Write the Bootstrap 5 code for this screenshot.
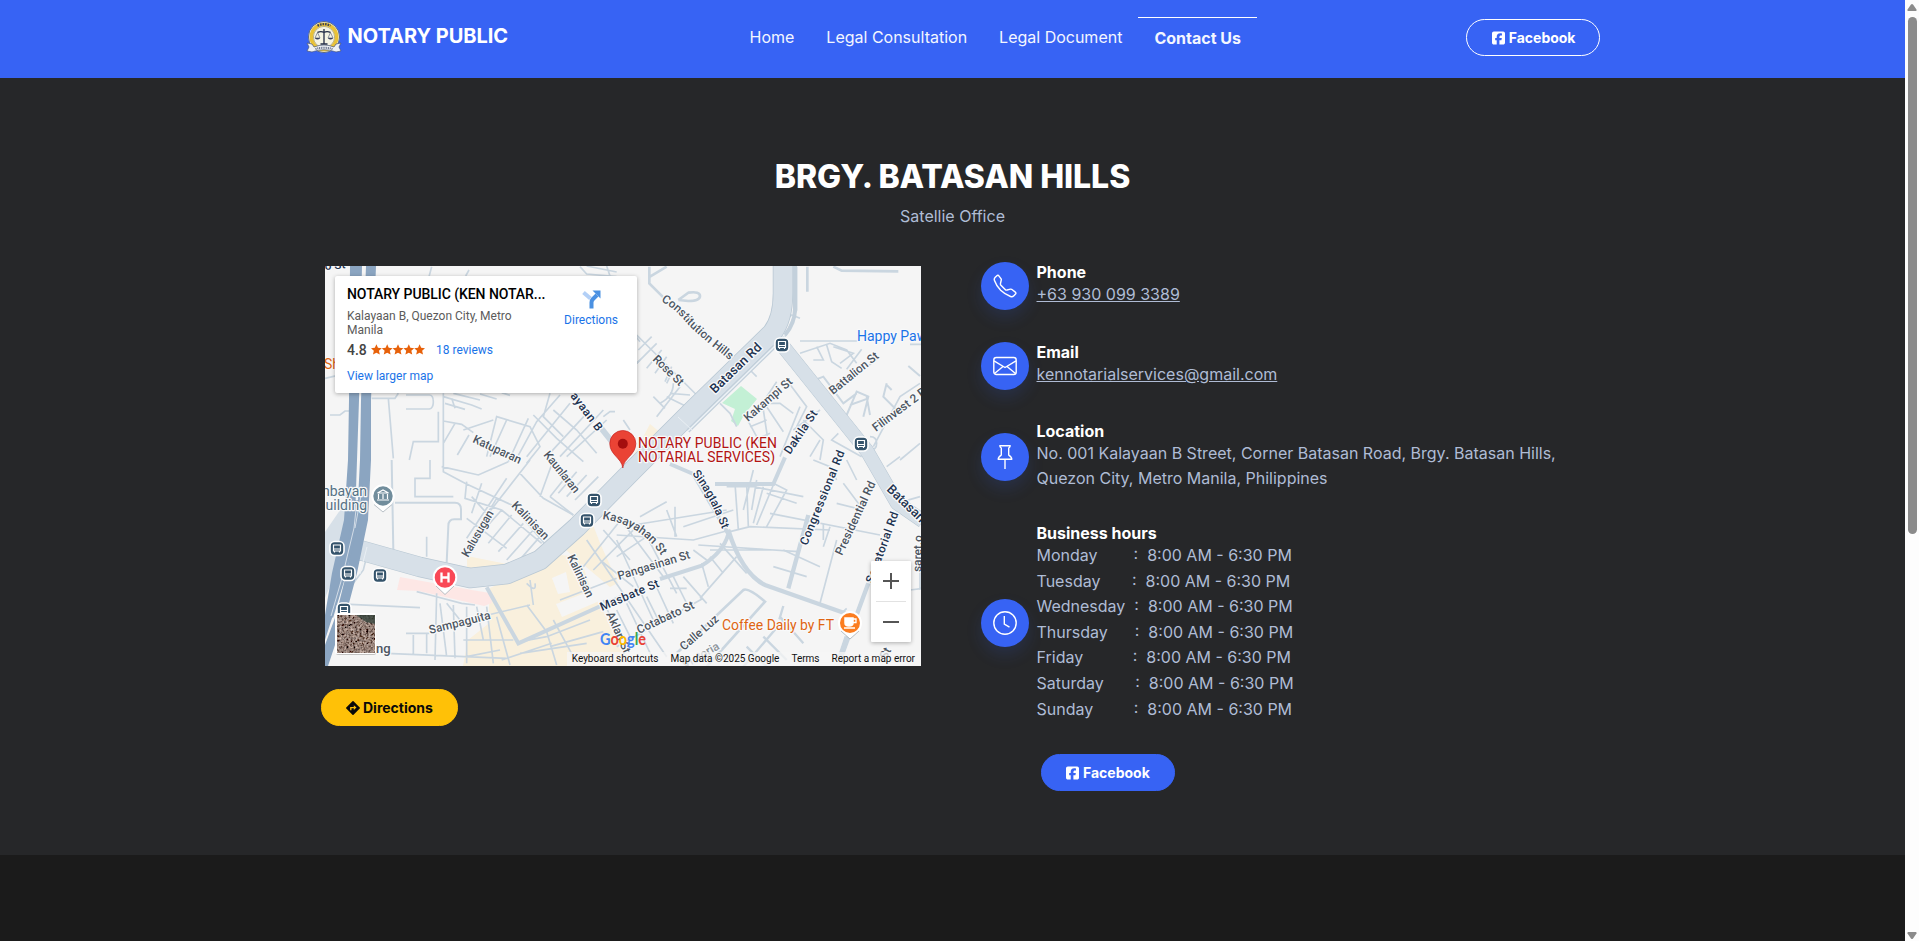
<!DOCTYPE html>
<html lang="en">
<head>
<meta charset="utf-8">
<meta name="viewport" content="width=device-width, initial-scale=1">
<title>Notary Public - Contact Us</title>
<link href="https://cdn.jsdelivr.net/npm/bootstrap@5.3.0/dist/css/bootstrap.min.css" rel="stylesheet">
<style>
  body { font-family: Inter, "Liberation Sans", sans-serif; font-size: 16px; line-height: 1.6; background: #1b1b1b; color: #afbcd5; height: 941px; overflow: hidden; }
  .topbar { background: #3763f4; height: 78px; }
  .brand-text { font-size: 20px; font-weight: 700; color: #fff; line-height: 1; letter-spacing: -.03px; }
  .topbar .nav-link { color: #f3f6ff; padding: 0 16px; line-height: 24px; }
  .topbar .nav-link.active { color: #f3f6ff; font-weight: 650; border-top: 1px solid #fff; padding-top: 8px; height: 44px; }
  .topnav { padding-top: 25px; }
  .topnav .active { margin-top: -8px; }
  .pill-btn { height: 37px; border-radius: 19px; font-size: 14px; font-weight: 700; padding: 0 24px; line-height: 35px; --bs-btn-color: #fff; --bs-btn-hover-color: #fff; border-width: 1px; display: inline-flex; align-items: center; gap: 4px; white-space: nowrap; }
  .pill-blue { background: #3763f4; border-color: #3763f4; color: #fff; }
  .pill-line { border-color: #fff; color: #fff; padding: 0 23px 0 25px; }
  .pill-gold { background: #ffc107; border-color: #ffc107; color: #0a0a0a; gap: 3px; }
  .contact-area { background: #262729; height: 777px; padding-top: 83px; }
  .contact-area h1 { font-size: 32px; font-weight: 800; color: #fff; line-height: 1; margin: 0; letter-spacing: -.07px; }
  .map-frame { width: 596px; height: 400px; margin-left: 4px; font-family: Roboto, "Liberation Sans", sans-serif; background: #f5f5f5; }
  .place-card { left: 10px; top: 10px; width: 302px; height: 117px; background: #fff; border-radius: 2px; box-shadow: 0 1px 4px rgba(0,0,0,.3); padding: 10px 12px; font-size: 12px; line-height: 14px; color: #5b5b5b; }
  .place-card .ttl { font-size: 14px; font-weight: 500; color: #000; line-height: 16px; white-space: nowrap; letter-spacing: -.06px; }
  .place-card .lnk { color: #1a73e8; }
  .place-card .go { right: 19px; top: 14px; }
  .zoom-box { left: 546px; top: 295px; width: 40px; height: 81px; background: #fff; border-radius: 1px; box-shadow: 0 1px 4px rgba(0,0,0,.3); }
  .terms { right: 0; bottom: 0; height: 14px; font-size: 10px; line-height: 14px; color: #111; background: rgba(245,245,245,.75); padding: 0 6px 0 5px; gap: 12px; white-space: nowrap; }
  .info-list { gap: 32px; }
  .info-item { gap: 7.5px; }
  .disc { width: 48px; height: 48px; border-radius: 50%; background: #3763f4; box-shadow: 0 8px 16px rgba(55,99,244,.15); flex: none; }
  .info-item h6 { font-size: 16px; font-weight: 700; color: #fff; line-height: 19.2px; margin: 0; }
  .info-item p, .info-item a { color: #afbcd5; }
  .scroller { width: 14px; background: #fdfdfd; height: 941px; padding: 4px 0 1px; }
  .thumb { width: 9px; height: 517px; border-radius: 5px; background: #8b8b8b; margin: 5px auto 0; }
</style>
</head>
<body>
<div class="d-flex">
<div class="flex-grow-1">
  <header class="topbar">
    <div class="container d-flex justify-content-between position-relative" style="max-width:1320px">
      <a class="d-flex text-decoration-none" href="#">
        <svg width="36" height="36" viewBox="0 0 36 36" style="margin:19px 6px 0 1px">
          <circle cx="18" cy="18" r="15.6" fill="#e8edf2" stroke="#5c6b86" stroke-width="1"/>
          <circle cx="18" cy="18" r="12.7" fill="#f8f0c8" stroke="#e9c237" stroke-width="3.6"/>
          <circle cx="18" cy="18" r="10.6" fill="#f6f4e4" stroke="#857737" stroke-width=".5"/>
          <path d="M11.5 6.8q6.500-3.300 13 0" fill="none" stroke="#3d4155" stroke-width="2.200" stroke-dasharray="1.600 1"/>
          <path d="M18 10v15M11.500 13.300q3.500-1.500 6.500 0q3-1.500 6.500 0M14.500 25h7" fill="none" stroke="#222b45" stroke-width="1.300"/>
          <path d="M11.500 13.500l-2.500 5.500h5zM24.500 13.500l-2.500 5.500h5z" fill="none" stroke="#47516d" stroke-width=".6"/>
          <path d="M8.800 19h5.400q-2.700 3-5.400 0M21.800 19h5.400q-2.700 3-5.400 0" fill="#38415f"/>
          <path d="M1 24l5 1 2 3q10-4 20 0l2-3 5-1-2 4 2 4-5 1-1.500-.5q-10.500-3.500-21 0L6 33l-5-1 2-4z" fill="#eef1f5" stroke="#4a5676" stroke-width=".7"/>
          <path d="M9.500 30q8.500-2.500 17 0" fill="none" stroke="#666f89" stroke-width="2" stroke-dasharray="1 .8"/>
        </svg>
        <span class="brand-text" style="margin-top:26px">NOTARY PUBLIC</span>
      </a>
      <nav class="nav topnav flex-nowrap position-absolute" style="left:441px">
        <a class="nav-link" href="#">Home</a>
        <a class="nav-link" href="#">Legal Consultation</a>
        <a class="nav-link" href="#">Legal Document</a>
        <a class="nav-link active" href="#">Contact Us</a>
      </nav>
      <a class="btn pill-btn pill-line" style="margin:19px 1px 0 0" href="#">
        <svg width="13" height="14" viewBox="0 32 448 448" fill="currentColor"><path d="M64 32C28.700 32 0 60.700 0 96V416c0 35.300 28.700 64 64 64h98.200V334.200H109.400V256h52.800V222.300c0-87.100 39.400-127.500 125-127.500c16.200 0 44.200 3.200 55.700 6.400V172c-6-.6-16.500-1-29.600-1c-42 0-58.200 15.900-58.200 57.200V256h83.600l-14.400 78.200H255V480H384c35.300 0 64-28.700 64-64V96c0-35.300-28.700-64-64-64H64z"/></svg>Facebook</a>
    </div>
  </header>

  <main class="contact-area">
    <div class="text-center">
      <h1>BRGY. BATASAN HILLS</h1>
      <p class="mb-0" style="margin-top:10.500px">Satellie Office</p>
    </div>
    <div class="d-flex" style="margin:33px 0 0 321px">
      <section style="width:660px">
        <div class="map-frame position-relative overflow-hidden" style="margin-top:4px">
<svg class="d-block" width="596" height="400" viewBox="325 266 596 400" fill="none">
  <defs>
    <g id="bus"><rect x="-7" y="-7" width="14" height="14" rx="4.500" fill="#34536b" stroke="#fff" stroke-width="1.600"/><path d="M-3.500-3.500h7v6h-7zM-2.500 2.500v1.500M2.500 2.500v1.500" stroke="#fff" stroke-width="1.200"/><path d="M-3.500.5h7" stroke="#fff" stroke-width="1"/></g>
    <filter id="ground" x="0" y="0" width="100%" height="100%"><feTurbulence type="fractalNoise" baseFrequency=".45" numOctaves="3" seed="4"/><feColorMatrix values="1 .3 0 0 -.36  .8 .3 0 0 -.34  .7 .3 0 0 -.32  0 0 0 0 1"/></filter>
    <path id="pConst" d="M661 301Q675 309 686 322T731 361"/>
    <path id="pSin" d="M692 474Q710 495 725 537"/>
    <path id="pKas" d="M602 519Q645 525 665 562"/>
  </defs>
  <rect x="325" y="266" width="596" height="400" fill="#f5f5f5"/>
  <!-- land use areas -->
  <g fill="#f9f0dd">
    <path d="M650 424l17 14-10 12-85 90-20 22-40 22-45-6v-22l40 8 35-8 40-28 30-33z"/>
    <path d="M500 583l60-28 20 2 10 30 38 70-10 9H463l5-26 20-16 2-36z"/>
    <path d="M560 545l30-28 10 26 18 40-8 4z"/>
  </g>
  <path d="M552 578l14-6 4 20-12 2zM556 604l40-15 8 10-42 18z" fill="#f5f5f5"/>
  <path d="M400 577l72 13 18 3 2 10-8 3-65-15-22-1z" fill="#fde7e5"/>
  <path d="M741 386l16 13-13 16-6 11-7-5 4-12-13-6z" fill="#c3f0d5"/>

  <!-- minor streets, upper left -->
  <g transform="translate(320 260) scale(.33333)" stroke="#cad6e0" stroke-width="5">
    <path d="M335 20l-8 30M447 30l-10 18M780 20l20 22 90 8M800 18l90 18M860 18l10 30M15 355l35-8" />
    <path d="M30 465h30l15-12h18M155 415h70l10-15M205 415l15 180M258 405h70q12 0 12 20t-12 22h-70M355 455v90h-75l-12 55"/>
    <path d="M370 400v200M370 410l85 25 30 12M375 430l60 18M400 400l80 20M395 415l10 30M480 402l50 15M545 398l25 8M370 483l55 10 35 25M405 490l-35 60M447 525l-35 60"/>
    <path d="M500 590l30-120 100 30 30 60-40 50M520 480l-90 30M560 480l-50 110M625 475l-60 130M690 400l-20 70 60 60M720 405l-70 80-60 110M640 465l70 70 80 70M750 430l-130 160M800 460l-120 130M850 450l-130 140M860 480l-120 110M700 450l70 60 60 70"/>
    <path d="M850 470l20-15h15M910 480l20 30M940 220l20 25M950 310l10-10"/>
  </g>
  <!-- minor streets, upper right -->
  <g transform="translate(620 260) scale(.33333)" stroke="#cad6e0" stroke-width="5">
    <path d="M88 20v50l45 45M90 50l50-30" stroke-width="8"/><path d="M175 120l30-22q35-5 35 10t-35 15l-30-3" stroke-width="8"/>
    <path d="M562 20v75M640 20l25 12 170 2" stroke-width="8"/><path d="M530 20v130l-35 80"/>
    <path d="M50 225l180 180M55 270l40-40M50 310l60-60M80 325l45-55M105 340l35-50M150 350l-10 20M155 320l-20 45M100 410l35 35M180 380l-70 90M160 370q0 40-40 60M140 410l70 35M150 400l60 5"/>
    <path d="M540 243h180M870 253h35M540 280l90-30 50 20 30 40M590 260l20 40h-30M620 255l15 50 30 20M640 260l60 20-40 30M725 268l-45 60M780 290l-140 110"/>
    <path d="M520 280l90 130M585 360l25-10 60 80 40-30M680 465l30-70 35 15-15 60M690 435l55-20M740 410l10 55M800 370l-10 40 40 40M800 375l15 15M865 318l35 30" stroke-width="6"/>
    <path d="M470 365l-40 60 60 90M500 360l60 80-30 60M450 430h30l40 30M380 475l60 110M430 450l20 130M390 500l50-20M405 540l45-20M520 510l80-60M550 480l60 60-10 60M570 590l30-50M540 440l-60 150M750 530q20 0 20 20t-20 20M760 560l80-150 60-40M840 600l60-50M655 520l-20 20 90 50"/>
    <path d="M300 430l30 30 20 40M390 330l20 20M500 180l15-15 25 10"/>
  </g>
  <!-- minor streets, lower left -->
  <g transform="translate(320 460) scale(.33333)" stroke="#cad6e0" stroke-width="5">
    <path d="M215 0l5 270M225 128h180q18 0 18 20v30h-20q-18 0-18 20l-5 110" stroke-width="6"/>
    <path d="M320 230v60M330 0v55h-45v55h115M20 260l60 30M100 280l40-30M100 300h40M150 250l-20 80-30 40"/>
    <path d="M370 0v35l65 35 140 65 115 135M365 20l110 25 90-40M440 65l-5 50 110 35 120 100M560 55l-120 180M630 0l-125 160M600 40l70 75 90 50M690 110l40-50M700 0l-40 110M530 115l-70 115M545 150l-90 100M575 165l-70 85M610 190l-75 85M640 210l-80 90M660 230l-70 80M440 175l120 90M455 110l50 55M485 70l-30 90"/>
    <path d="M765 120l70-70M740 110l60-65M715 100l55-65M690 110l70 55"/>
    <path d="M90 433l210 10M290 395l40 10 95 25 40 5M360 430l20 160M380 430l40 50M350 400l-5 200M400 435l5 160M440 440v170M470 440l20 100M500 440l20 170M530 470l40 145M258 520h70M280 525v60M320 520v60M200 580l360 15M420 485l210-50M430 540h150M620 435l60 80 30 100M630 360l10 75M620 370q30 30 25 0M600 545l80 -15M680 530l130-50M600 580l200-30M690 560l160-45M720 420l170-65M545 600l150-50M440 590l100-20M700 480l60 110"/>
    <path d="M500 382l95 168 320-145" stroke-width="12"/><path d="M800 240l240 350M840 300l100 80M850 210l80 90M910 170l-120 150M960 190l-140 140M920 430l80 170M850 420l50 120"/>
  </g>
  <!-- minor streets, lower right -->
  <g transform="translate(620 460) scale(.33333)" stroke="#cad6e0" stroke-width="5">
    <path d="M285 72h175l35-80" stroke-width="12"/><path d="M150 12l70 30 105 180q-15 55-80 95l-125 40" stroke-width="12"/><path d="M325 210q40 130 110 165l240 85" stroke-width="13"/><path d="M505 385l60-220M745 370l-85 230M660 590l20-60" stroke-width="13"/>
    <path d="M345 70l10 140M380 70l5 130 M410 60l-15 90M430 80l-30 110M460 75l-50 120M460 70l40 20-60 110M400 30l-30 120M320 80h80l150 30M440 100l90 30M450 160l330 65M320 150l-280 45M330 210l-110 30-230-15M330 215l60-15 240 10M235 255l300 20M270 270h180M340 150l-150 50M165 140v90M140 150l30 80M60 170l80-45M-10 290l90-60M10 190l120 160M60 190l110 210M-10 240l110 240"/>
    <path d="M350 290l-110 125M300 250l80 90M270 290l40 50M220 270l40 30M190 350l70 80M160 350l50 100M100 360l60 130M150 385h50M80 410l40 80M245 310l20 70M-10 560l260-145M30 530l-40-80"/>
    <path d="M170 580l200-190q15-8 65 35L260 620" stroke-width="8"/><path d="M490 438l-12 40M480 470l70 80M430 530l70 70M380 560l60 60M490 480l-120 140" stroke-width="7"/>
    <path d="M460 320l100 30M490 270l110 50M600 430l50-190M610 190v50M630 200l-20 60M560 180l30 10M650 130l80 20M580 0l50 20 20 40M680 0l30 60M900 110l-70 20M870 390l40-5M900 330v60M800 20l40-30M670 70l60 80M670 455l10-10"/>
  </g>
  <!-- arterial roads -->
  <g stroke-linejoin="round">
    <path d="M356 549l64 18 50 11 37-4 33-14 37-33 56-57 60-60 79-77q11-14 11-40V266" stroke="#b8c7d3" stroke-width="20.500"/>
    <path d="M782 345l85 106 30 52 26 18" stroke="#b8c7d3" stroke-width="14.500"/>
    <path d="M356 549l64 18 50 11 37-4 33-14 37-33 56-57 60-60 79-77q11-14 11-40V266" stroke="#d7e0e8" stroke-width="19"/>
    <path d="M778 340l89 111 30 52 26 18" stroke="#d7e0e8" stroke-width="13.500"/>
    <path d="M774 347l-86 84M795 266v43q0 14-10 26" stroke="#c3d0db" stroke-width="4"/><path d="M774 347l-86 84" stroke="#edf2f6" stroke-width="1.500"/>
    <path d="M678 417l14 13M367 547l-7 27" stroke="#edf2f6" stroke-width=".8"/>
    <path d="M601 428l12 15" stroke="#cad6e0" stroke-width="6"/>
    <path d="M325 532l22-32-6 60-16 38z" fill="#d7e0e8"/>
  </g>
  <path d="M350 266h12L359 400 357 460 355 520 343 575 333 615 325 640V615L332 573 344 520 348 460 349 400zM366 266h10L371 400 371 460 368 520 357 573 348 607 335 645 328 666H325V645L336 615 346 575 357 520 360 460 361 400z" fill="#8ba5c1"/>
  <path d="M355 500l5 0-3 30-12 48-12 40-2-2 14-60z" fill="#8ba5c1"/><path d="M357 500l-3 28-12 50-11 38M362 490l-7 38" stroke="#f0f4f7" stroke-width=".7"/>

  <!-- street names -->
  <g font-family="Roboto, sans-serif" font-size="11.800" fill="#4c5561" stroke="#f8f9fa" stroke-width="2.500" paint-order="stroke" stroke-linejoin="round" font-weight="500">
    <text transform="translate(472 442) rotate(25)" textLength="52">Katuparan</text>
    <text transform="translate(543 455) rotate(51)" textLength="50">Kaunlaran</text>
    <text transform="translate(511 506) rotate(46)" textLength="48">Kalinisan</text>
    <text transform="translate(567 557) rotate(64)" textLength="46">Kalinisan</text>
    <text transform="translate(619 580) rotate(-17)" textLength="75">Pangasinan St</text>
    <text transform="translate(639 634) rotate(-25)" textLength="62">Cotabato St</text>
    <text transform="translate(606 614) rotate(66)" textLength="44">Aklan St</text>
    <text transform="translate(684 651) rotate(-41)" textLength="47">Calle Luz</text>
    <text transform="translate(685 669) rotate(-30)" fill="#8d949b">Victoria</text>
    <text transform="translate(430 634) rotate(-14)" textLength="63">Sampaguita</text>
    <text transform="translate(468 558) rotate(-60)" textLength="52">Kalusugan</text>
    <text transform="translate(652 360) rotate(44)" textLength="38">Rose St</text>
    <text transform="translate(748 422) rotate(-41)" textLength="60">Kakampi St</text>
    <text transform="translate(833 395) rotate(-39)" textLength="60">Battalion St</text>
    <text transform="translate(876 432) rotate(-37)">Filinvest 2 Rd</text>
    <text transform="translate(842 556) rotate(-65)" textLength="80">Presidential Rd</text>
    <text transform="translate(921 572) rotate(-88)">saret.o</text>
    <text transform="translate(886 660) rotate(-60)">St</text>
    <text><textPath href="#pConst">Constitution Hills</textPath></text>
    <text><textPath href="#pKas">Kasayahan St</textPath></text>
    <text x="376" y="653" font-size="13">ng</text>
    <g fill="#1e3350">
      <text transform="translate(325 270) rotate(-5)">o St</text>
      <text transform="translate(570 396) rotate(53)" textLength="45">ayaan B</text>
      <text transform="translate(602 611) rotate(-23)" textLength="63">Masbate St</text>
      <text transform="translate(715 394) rotate(-44)" textLength="66" font-size="13">Batasan Rd</text>
      <text transform="translate(790 455) rotate(-56)" textLength="50">Dakila St</text>
      <text transform="translate(807 546) rotate(-68)" textLength="101">Congressional Rd</text>
      <text transform="translate(873 584) rotate(-70)" textLength="75">Senatorial Rd</text>
      <text transform="translate(886 490) rotate(44)" font-size="13">Batasan</text>
      <text><textPath href="#pSin">Sinagtala St</textPath></text>
    </g>
    <g font-weight="400" font-size="14">
      <text x="857" y="341" fill="#1a73e8">Happy Paws</text>
      <text x="722" y="630" fill="#df6512" textLength="112">Coffee Daily by FT</text>
      <text x="324" y="369" fill="#df6512">Shell</text>
      <text x="638" y="448" fill="#b31412" textLength="139">NOTARY PUBLIC (KEN</text>
      <text x="638" y="462" fill="#b31412" textLength="137">NOTARIAL SERVICES)</text>
      <text x="367" y="496" fill="#557184" text-anchor="end">mbayan</text>
      <text x="367" y="510" fill="#557184" text-anchor="end">uilding</text>
    </g>
  </g>

  <!-- place markers -->
  <use href="#bus" x="782" y="345"/><use href="#bus" x="861" y="444"/><use href="#bus" x="594" y="500"/><use href="#bus" x="587" y="520.500"/><use href="#bus" x="337" y="548.500"/><use href="#bus" x="348" y="573.500"/><use href="#bus" x="380" y="575.500"/><use href="#bus" x="344" y="610"/>
  <g stroke="#fff" stroke-width="1.500">
    <path d="M383 511.500l-8.500-7.500h17z" fill="#fff" stroke-linejoin="round"/><circle cx="383" cy="496" r="10.700" fill="#718d9c" stroke-width="2"/>
    <path d="M445 593.500l-8.500-7.500h17z" fill="#fff" stroke-linejoin="round"/><circle cx="445" cy="577.500" r="11.300" fill="#f94856" stroke-width="2"/>
    <path d="M850 638l-8.500-7.500h17z" fill="#fff" stroke-linejoin="round"/><circle cx="850" cy="623" r="11" fill="#fb7d20" stroke-width="2"/>
  </g>
  <path d="M374 504.500l9 7.500 9-7.500M436 586l9 8.500 9-8.500M841 631l9 8 9-8" stroke="#9aa5ae" stroke-width=".7"/>
  <path d="M377.500 493l5.500-3 5.500 3zM378.500 494v5M383 494v5M387.500 494v5M377 500h12" stroke="#fff" stroke-width="1.200"/>
  <path d="M441.500 572.500v10M448.500 572.500v10M441.500 577.500h7" stroke="#fff" stroke-width="2.300"/>
  <path d="M845 618h8v5q0 3-4 3t-4-3zM844 628h11" fill="#fff" stroke="#fff" stroke-width="1.500"/><path d="M853 619h3v3.500h-3" stroke="#fff" stroke-width="1.300"/>
  <path d="M622.800 468c-1-10-13-13-13-24.500a13 13 0 0 1 26 0c0 11.500-12 14.500-13 24.500z" fill="#ea4335" stroke="#c5221f" stroke-width=".7"/><circle cx="622.800" cy="443.800" r="5" fill="#a50e0e"/>
  <text y="645" x="600" font-family="Lato, sans-serif" font-size="17.500" font-weight="700" textLength="46" lengthAdjust="spacingAndGlyphs"><tspan fill="#4285f4">G</tspan><tspan fill="#ea4335">o</tspan><tspan fill="#fbbc04">o</tspan><tspan fill="#4285f4">g</tspan><tspan fill="#34a853">l</tspan><tspan fill="#ea4335">e</tspan></text>
  <rect x="336" y="614" width="40" height="41" rx="2" fill="#888" opacity=".45"/>
  <rect x="335" y="613" width="41" height="41" rx="2" fill="#fff"/><rect x="337" y="615" width="38" height="38" filter="url(#ground)"/><path d="M356 615h19v9l-9-2z" fill="#34443c" opacity=".8"/>
</svg>
          <div class="place-card position-absolute">
            <div class="ttl">NOTARY PUBLIC (KEN NOTAR...</div>
            <div style="margin-top:7px">Kalayaan B, Quezon City, Metro<br>Manila</div>
            <div class="d-flex align-items-center" style="margin-top:5px;height:16px"><span style="font-size:14px;font-weight:500;color:#444;width:24px">4.8</span>
              <svg width="54" height="12" viewBox="0 0 55 12" fill="#e7610a"><path id="st" d="M5.500.2l1.600 3.600 3.900.4-2.900 2.600.9 3.900-3.500-2-3.500 2 .9-3.900L0 4.200l3.900-.4z"/><use href="#st" x="11"/><use href="#st" x="22"/><use href="#st" x="33"/><use href="#st" x="44"/></svg>
              <span class="lnk" style="margin-left:11px">18 reviews</span></div>
            <div class="lnk" style="margin-top:11px">View larger map</div>
            <div class="go position-absolute text-center lnk"><svg class="d-block mx-auto" width="19" height="19" viewBox="0 0 19 19"><path d="M1.500 2.500l7 6" stroke="#b3d0f7" stroke-width="4"/><path d="M9.500 18.500v-6q0-2 1.500-3.500l4-4" stroke="#4b91e2" stroke-width="4" fill="none"/><path d="M10.500.5h8v8z" fill="#4b91e2"/></svg><div style="margin-top:4px">Directions</div></div>
          </div>
          <div class="zoom-box position-absolute"><svg class="d-block" width="40" height="81" viewBox="0 0 40 81"><path d="M12 20h16M20 12v16M12 61h16" stroke="#555" stroke-width="2"/><path d="M5 40.500h30" stroke="#e2e2e2"/></svg></div>
          <div class="terms position-absolute d-flex"><span>Keyboard shortcuts</span><span>Map data ©2025 Google</span><span>Terms</span><span>Report a map error</span></div>
        </div>
        <a class="btn pill-btn pill-gold" style="margin-top:23px" href="#"><svg width="14" height="14" viewBox="0 0 14 14"><path d="M7 .8L13.200 7 7 13.200.8 7z" fill="#0a0a0a" stroke="#0a0a0a" stroke-width="1.500" stroke-linejoin="round"/><path d="M4.800 9.300V6.600h4" fill="none" stroke="#ffc107" stroke-width="1.300"/><path d="M7.800 4.300l2.700 2.300-2.700 2.300z" fill="#ffc107"/></svg>Directions</a>
      </section>

      <section class="info-list d-flex flex-column" style="margin-top:-.6px">
        <div class="info-item d-flex align-items-center">
          <span class="disc d-flex align-items-center justify-content-center"><svg width="24" height="24" viewBox="0 0 16 16" fill="none" stroke="#fff" stroke-width=".95"><path d="M3.900 1.200a.85.85 0 0 0-1.300-.1L1.500 2.200c-.6.600-.8 1.400-.5 2.100a18 18 0 0 0 4.100 6.600 18 18 0 0 0 6.600 4.100c.8.300 1.600.1 2.200-.5l1.100-1.100a.85.85 0 0 0-.1-1.300l-2.500-1.900a.9.9 0 0 0-.7-.1l-2.300.6a1.400 1.400 0 0 1-1.300-.4L5.300 7.500A1.400 1.400 0 0 1 5 6.300l.5-2.300a.9.9 0 0 0-.1-.7z"/></svg></span>
          <div><h6>Phone</h6><a href="#" class="d-block">+63 930 099 3389</a></div>
        </div>
        <div class="info-item d-flex align-items-center">
          <span class="disc d-flex align-items-center justify-content-center"><svg width="24" height="24" viewBox="0 0 24 24" fill="none" stroke="#fff" stroke-width="1.400"><rect x=".8" y="3.500" width="22.400" height="17" rx="2.500"/><path d="M1 6.800l11 6.700 11-6.700M1.500 19.500l8.500-7M22.500 19.500l-8.500-7"/></svg></span>
          <div><h6>Email</h6><a href="#" class="d-block">kennotarialservices@gmail.com</a></div>
        </div>
        <div class="info-item d-flex align-items-center">
          <span class="disc d-flex align-items-center justify-content-center"><svg width="24" height="24" viewBox="0 0 24 24" fill="none" stroke="#fff" stroke-width="1.400" stroke-linejoin="round"><path d="M6.800.8h10.400q0 1.400-1.500 2.300v7q3.100 1.700 3.100 4.200H5.200q0-2.500 3.100-4.200v-7Q6.800 2.200 6.800.8zM12 14.500V24"/></svg></span>
          <div><h6>Location</h6><p class="mb-0">No. 001 Kalayaan B Street, Corner Batasan Road, Brgy. Batasan Hills,<br>Quezon City, Metro Manila, Philippines</p></div>
        </div>
        <div class="info-item d-flex align-items-center">
          <span class="disc d-flex align-items-center justify-content-center"><svg width="24" height="24" viewBox="0 0 24 24" fill="none" stroke="#fff" stroke-width="1.400"><circle cx="12" cy="12" r="11.200"/><path d="M11.300 5v8.200l5.200 3"/></svg></span>
          <div><h6>Business hours</h6><p class="mb-0">Monday&nbsp;&nbsp;&nbsp;&nbsp;&nbsp;&nbsp;&nbsp;&nbsp;:&nbsp;&nbsp;8:00 AM - 6:30 PM<br>Tuesday&nbsp;&nbsp;&nbsp;&nbsp;&nbsp;&nbsp;&nbsp;:&nbsp;&nbsp;8:00 AM - 6:30 PM<br>Wednesday&nbsp;&nbsp;:&nbsp;&nbsp;8:00 AM - 6:30 PM<br>Thursday&nbsp;&nbsp;&nbsp;&nbsp;&nbsp;&nbsp;:&nbsp;&nbsp;8:00 AM - 6:30 PM<br>Friday&nbsp;&nbsp;&nbsp;&nbsp;&nbsp;&nbsp;&nbsp;&nbsp;&nbsp;&nbsp;&nbsp;:&nbsp;&nbsp;8:00 AM - 6:30 PM<br>Saturday&nbsp;&nbsp;&nbsp;&nbsp;&nbsp;&nbsp;&nbsp;:&nbsp;&nbsp;8:00 AM - 6:30 PM<br>Sunday&nbsp;&nbsp;&nbsp;&nbsp;&nbsp;&nbsp;&nbsp;&nbsp;&nbsp;:&nbsp;&nbsp;8:00 AM - 6:30 PM</p></div>
        </div>
        <div style="padding-left:60px;height:37px"><a class="btn pill-btn pill-blue" href="#"><svg width="13" height="14" viewBox="0 32 448 448" fill="currentColor"><path d="M64 32C28.700 32 0 60.700 0 96V416c0 35.300 28.700 64 64 64h98.200V334.200H109.400V256h52.800V222.300c0-87.100 39.400-127.500 125-127.500c16.200 0 44.200 3.200 55.700 6.400V172c-6-.6-16.500-1-29.600-1c-42 0-58.200 15.900-58.200 57.200V256h83.600l-14.400 78.200H255V480H384c35.300 0 64-28.700 64-64V96c0-35.300-28.700-64-64-64H64z"/></svg>Facebook</a></div>
      </section>
    </div>
  </main>
</div>
<div class="scroller d-flex flex-column align-items-center">
  <svg width="10" height="8" viewBox="0 0 10 8" fill="#8b8b8b"><path d="M4 .5q1-1 2 0l3.500 5Q9.800 7 9 7H1Q.2 7 .5 5.500z"/></svg>
  <div class="thumb mx-auto"></div>
  <svg class="mt-auto" width="10" height="8" viewBox="0 0 10 8" fill="#8b8b8b"><path d="M4 6.500q1 1 2 0l3.500-5Q9.800 0 9 0H1Q.2 0 .5 1.500z"/></svg>
</div>
</div>
<script src="https://cdn.jsdelivr.net/npm/bootstrap@5.3.0/dist/js/bootstrap.bundle.min.js"></script>
</body>
</html>
